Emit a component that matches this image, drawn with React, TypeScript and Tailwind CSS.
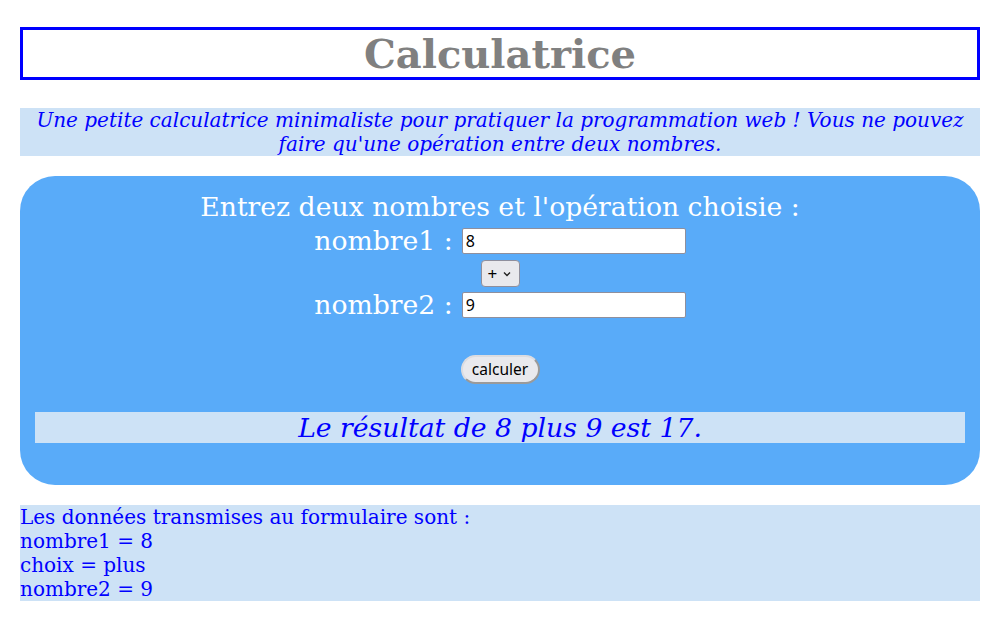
import { useState } from 'react';

const serif = "font-['DejaVu_Serif',serif]";
const sans = "font-['Noto_Sans','Open_Sans',sans-serif]";

export default function App() {
  const [n1, setN1] = useState('8');
  const [n2, setN2] = useState('9');
  const [op, setOp] = useState('plus');

  return (
    <div className={`${serif} bg-white min-h-[637px] pl-5 pr-[13px] pt-[27px] text-[20px]`}>
      {/* Title */}
      <div className="border-[3px] border-[#0000ff] h-[53px] flex items-center justify-center">
        <h1 className="text-[40px] leading-[47px] font-bold text-[#808080]">Calculatrice</h1>
      </div>

      {/* Description */}
      <p className="mt-[28px] bg-[#cde2f6] text-[#0000ff] italic text-center text-[20px] leading-[24px]">
        Une petite calculatrice minimaliste pour pratiquer la programmation web ! Vous ne pouvez faire qu'une opération entre deux nombres.
      </p>

      {/* Form */}
      <div className="mt-5 bg-[#59abf9] rounded-[35px] h-[309px] pt-[15px] px-[15px] flex flex-col items-center text-white">
        <p className="text-[26.67px] leading-[31px]">Entrez deux nombres et l'opération choisie :</p>
        <div className="flex items-center gap-[9px] mt-[3px] h-[31px]">
          <span className="text-[26.67px] leading-[31px]">nombre1 :</span>
          <input
            value={n1}
            onChange={(e) => setN1(e.target.value)}
            className={`w-[224px] h-[26px] bg-white border border-[#8f8f9d] rounded-[2px] px-[3px] text-[16px] text-black ${sans} outline-none`}
          />
        </div>
        <div className="mt-[4px] h-[27px] flex items-center">
          <div className={`relative w-[39px] h-[27px] bg-[#e9e9ed] border border-[#8f8f9d] rounded-[4px] flex items-center pl-[6px] text-black ${sans} text-[17px] leading-none`}>
            <span>+</span>
            <svg className="absolute right-[8px] top-[10px]" width="8" height="6" viewBox="0 0 8 6" fill="none" stroke="#222" strokeWidth="1.4">
              <path d="M1 1.5l3 3 3-3" />
            </svg>
            <select
              value={op}
              onChange={(e) => setOp(e.target.value)}
              className="absolute inset-0 opacity-0"
            >
              <option value="plus">+</option>
              <option value="moins">-</option>
              <option value="fois">*</option>
              <option value="divise">/</option>
            </select>
          </div>
        </div>
        <div className="flex items-center gap-[9px] mt-[2px] h-[31px]">
          <span className="text-[26.67px] leading-[31px]">nombre2 :</span>
          <input
            value={n2}
            onChange={(e) => setN2(e.target.value)}
            className={`w-[224px] h-[26px] bg-white border border-[#8f8f9d] rounded-[2px] px-[3px] text-[16px] text-black ${sans} outline-none`}
          />
        </div>
        <button className={`mt-[35px] w-[79px] h-[29px] rounded-full bg-[#e9e9ed] border-2 border-[#9a9a9a] border-t-[#dcdce0] border-l-[#dcdce0] text-black ${sans} text-[15.5px] leading-none`}>
          calculer
        </button>
        <p className="mt-[28px] w-full h-[31px] bg-[#cde2f6] text-[#0000ff] italic text-[26.67px] leading-[31px] text-center">
          Le résultat de 8 plus 9 est 17.
        </p>
      </div>

      {/* Données */}
      <div className="mt-5 bg-[#cde2f6] text-[#0000ff] text-[20px] leading-[24px]">
        <p>Les données transmises au formulaire sont :</p>
        <p>nombre1 = 8</p>
        <p>choix = plus</p>
        <p>nombre2 = 9</p>
      </div>
    </div>
  );
}
